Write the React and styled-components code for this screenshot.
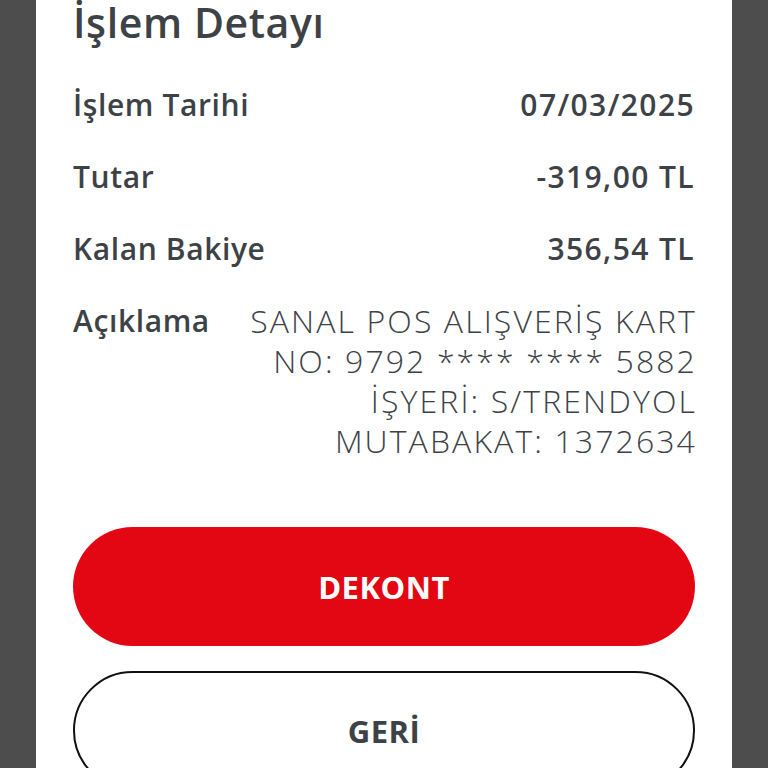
import styled, { createGlobalStyle } from "styled-components";

const GlobalStyle = createGlobalStyle`
  html, body {
    margin: 0;
    padding: 0;
    background: #4d4d4d;
  }
  body {
    font-family: "Open Sans", Lato, sans-serif;
  }
`;

// --- Layout ---
const Screen = styled.div`
  width: 768px;
  height: 768px;
  overflow: hidden;
  display: flex;
  justify-content: center;
  background: #4d4d4d;
`;

const Card = styled.div`
  width: 696px;
  background: #ffffff;
  padding: 0 37px;
  box-sizing: border-box;
  color: #3d4247;
`;

const Title = styled.h1`
  margin: 0;
  font-size: 41px;
  line-height: 46px;
  font-weight: 600;
  letter-spacing: 0.6px;
  margin-top: -1px;
`;

const Rows = styled.div`
  display: flex;
  flex-direction: column;
  margin-top: 40px;
`;

const Row = styled.div`
  display: flex;
  justify-content: space-between;
  align-items: flex-start;
  height: ${(p) => p.$height || "72px"};
`;

const Label = styled.div`
  font-size: 30px;
  line-height: 40px;
  font-weight: 600;
  letter-spacing: 0.6px;
  white-space: nowrap;
`;

const Value = styled(Label)`
  text-align: right;
  letter-spacing: 1.4px;
`;

const Description = styled.div`
  font-size: 32px;
  line-height: 40px;
  font-weight: 300;
  letter-spacing: 2.1px;
  text-align: right;
  padding-left: 20px;
  margin-right: -2px;
`;

const Buttons = styled.div`
  display: flex;
  flex-direction: column;
  gap: 25px;
  margin-top: 66px;
`;

const Button = styled.button`
  width: 100%;
  height: 119px;
  border-radius: 60px;
  font-family: inherit;
  font-size: 31px;
  font-weight: 700;
  letter-spacing: 0.5px;
  cursor: pointer;
  background: ${(p) => (p.$primary ? "#e30613" : "#ffffff")};
  color: ${(p) => (p.$primary ? "#ffffff" : "#3d4247")};
  border: ${(p) => (p.$primary ? "none" : "2px solid #111111")};
  box-sizing: border-box;
`;

const rows = [
  { label: "İşlem Tarihi", value: "07/03/2025" },
  { label: "Tutar", value: "-319,00 TL" },
  { label: "Kalan Bakiye", value: "356,54 TL" },
];

export default function App() {
  return (
    <>
      <GlobalStyle />
      <Screen>
        <Card>
          <Title>İşlem Detayı</Title>
          <Rows>
            {rows.map((r) => (
              <Row key={r.label}>
                <Label>{r.label}</Label>
                <Value>{r.value}</Value>
              </Row>
            ))}
            <Row $height="auto">
              <Label>Açıklama</Label>
              <Description>
                SANAL POS ALIŞVERİŞ KART
                <br />
                NO: 9792 **** **** 5882
                <br />
                İŞYERİ: S/TRENDYOL
                <br />
                MUTABAKAT: 1372634
              </Description>
            </Row>
          </Rows>
          <Buttons>
            <Button $primary>DEKONT</Button>
            <Button>GERİ</Button>
          </Buttons>
        </Card>
      </Screen>
    </>
  );
}
